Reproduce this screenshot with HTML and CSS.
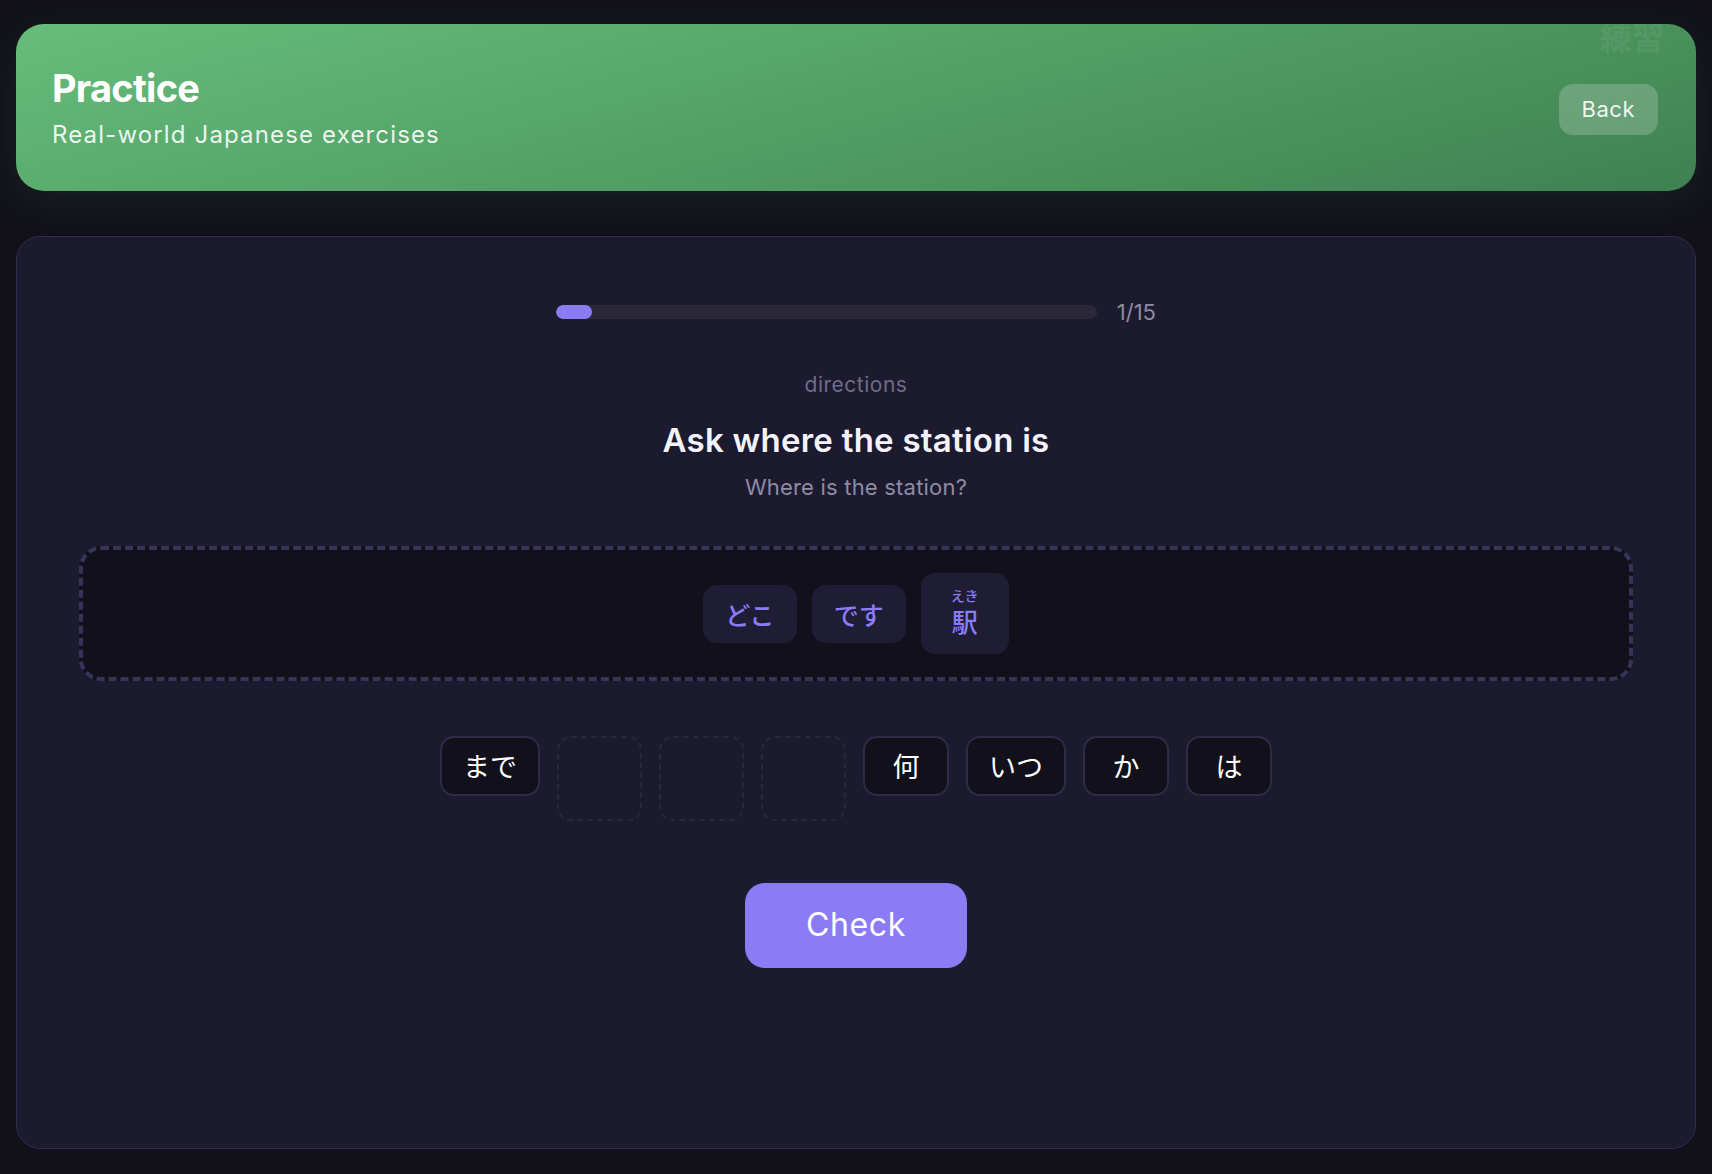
FILE: index.html
```html
<!DOCTYPE html>
<html>
<head>
    <title>Practice</title>
    <link rel="stylesheet" href="styles.css">
</head>
<body>
    <div class="app">
        <header class="hero">
            <div class="hero-text">
                <h1>Practice</h1>
                <p>Real-world Japanese exercises</p>
            </div>
            <button class="back-btn">Back</button>
            <span class="hero-mark">練習</span>
        </header>

        <main class="card">
            <div class="progress">
                <div class="progress-track">
                    <div class="progress-fill" style="width: 6.67%"></div>
                </div>
                <span class="progress-count">1/15</span>
            </div>

            <div class="category">directions</div>
            <h2 class="prompt">Ask where the station is</h2>
            <p class="translation">Where is the station?</p>

            <div class="answer-zone">
                <span class="tile placed">どこ</span>
                <span class="tile placed">です</span>
                <span class="tile placed furigana">
                    <span class="reading">えき</span>
                    <span class="kanji">駅</span>
                </span>
            </div>

            <div class="bank">
                <button class="tile bank-tile">まで</button>
                <span class="slot"></span>
                <span class="slot"></span>
                <span class="slot"></span>
                <button class="tile bank-tile">何</button>
                <button class="tile bank-tile">いつ</button>
                <button class="tile bank-tile">か</button>
                <button class="tile bank-tile">は</button>
            </div>

            <button class="check-btn">Check</button>
        </main>
    </div>
</body>
</html>
```

FILE: styles.css
```css
body {
    margin: 0;
    background: #12111a;
    font-family: Inter, "Noto Sans CJK JP", sans-serif;
    color: #fff;
}
.app {
    padding: 24px 16px;
}

/* header */
.hero {
    position: relative;
    overflow: hidden;
    display: flex;
    align-items: center;
    justify-content: space-between;
    padding: 41px 38px 38px 36px;
    margin-bottom: 45px;
    border-radius: 28px;
    background: linear-gradient(165deg, #66bd7b 0%, #3f8150 100%);
    box-shadow: 0 10px 40px rgba(70, 160, 100, 0.12);
}
.hero h1 {
    margin: 0;
    font-size: 38px;
    line-height: 46px;
    font-weight: 700;
    letter-spacing: -0.02em;
}
.hero p {
    margin: 6px 0 0 0;
    font-size: 24px;
    line-height: 36px;
    letter-spacing: 1.15px;
    color: rgba(255, 255, 255, 0.9);
}
.back-btn {
    background: rgba(255, 255, 255, 0.2);
    color: rgba(255, 255, 255, 0.92);
    border: none;
    border-radius: 14px;
    padding: 9px 23px;
    font-family: Inter, sans-serif;
    font-size: 22px;
    line-height: 33px;
    letter-spacing: 0.5px;
    cursor: pointer;
}
.hero-mark {
    position: absolute;
    top: -4px;
    right: 32px;
    font-family: "Noto Sans CJK JP", sans-serif;
    font-size: 32px;
    font-weight: 700;
    line-height: 1;
    color: rgba(255, 255, 255, 0.08);
}

/* exercise card */
.card {
    display: flex;
    flex-direction: column;
    align-items: center;
    min-height: 913px;
    box-sizing: border-box;
    padding: 60px 62px;
    background: #1c1a2f;
    border: 1px solid #312e4f;
    border-radius: 24px;
}
.progress {
    display: flex;
    align-items: center;
    gap: 20px;
    width: 600px;
    margin-bottom: 43px;
}
.progress-track {
    flex: 1;
    height: 14px;
    background: #2a2839;
    border-radius: 7px;
    overflow: hidden;
}
.progress-fill {
    height: 100%;
    background: #8b7cf6;
    border-radius: 7px;
}
.progress-count {
    font-size: 22px;
    line-height: 30px;
    color: #8e8ba3;
}
.category {
    font-size: 21px;
    line-height: 30px;
    letter-spacing: 0.5px;
    color: #6f6c86;
}
.prompt {
    margin: 21px 0 0 0;
    font-size: 33px;
    line-height: 38px;
    font-weight: 600;
    letter-spacing: 0.25px;
    color: #f4f3fa;
}
.translation {
    margin: 12px 0 42px 0;
    font-size: 22px;
    line-height: 33px;
    letter-spacing: 0.2px;
    color: #8e8ba3;
}

/* answer area */
.answer-zone {
    align-self: stretch;
    display: flex;
    justify-content: center;
    align-items: center;
    gap: 15px;
    min-height: 135px;
    box-sizing: border-box;
    padding: 20px 24px;
    margin-bottom: 55px;
    background: #12111b;
    border: 4px dashed #37345a;
    border-radius: 22px;
}
.tile {
    box-sizing: border-box;
    min-width: 86px;
    font-family: "Noto Sans CJK JP", sans-serif;
    line-height: 36px;
    text-align: center;
    border-radius: 14px;
}
.placed {
    background: #1f1d35;
    color: #8b7cf6;
    font-size: 25px;
    font-weight: 500;
    padding: 11px 22px;
}
.furigana {
    display: flex;
    flex-direction: column;
    align-items: center;
    min-width: 88px;
    padding: 14px 22px 16px 22px;
}
.furigana .reading {
    font-size: 14px;
    line-height: 17px;
}
.furigana .kanji {
    font-size: 26px;
    line-height: 34px;
}

/* word bank */
.bank {
    display: flex;
    align-items: flex-start;
    gap: 17px;
    margin-bottom: 62px;
}
.bank-tile {
    background: #12111b;
    color: #fff;
    border: 2px solid #2e2b47;
    padding: 10px 21px;
    font-size: 27px;
    cursor: pointer;
}
.slot {
    width: 85px;
    height: 85px;
    box-sizing: border-box;
    border: 2px dashed #29273e;
    border-radius: 14px;
}
.check-btn {
    background: #8b7cf6;
    color: #fff;
    border: none;
    border-radius: 20px;
    padding: 18px 61px 19px 61px;
    font-family: Inter, sans-serif;
    font-size: 32px;
    line-height: 48px;
    letter-spacing: 0.6px;
    cursor: pointer;
}
```
